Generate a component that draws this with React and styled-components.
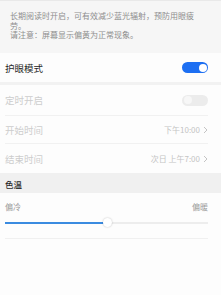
import React from "react";
import styled, { createGlobalStyle } from "styled-components";

const Global = createGlobalStyle`
  html, body { margin: 0; padding: 0; background: #fdfdfd; }
  body { font-family: "Noto Sans CJK SC", "Noto Sans", sans-serif; width: 221px; height: 295px; overflow: hidden; }
  * { box-sizing: border-box; }
`;

const Page = styled.div`
  width: 221px;
  height: 295px;
  display: flex;
  flex-direction: column;
  background: #fdfdfd;
`;

const Intro = styled.div`
  height: 53px;
  background: #f6f6f6;
  border-top: 1px solid #e9e9e9;
  padding: 10px 14px 0 10px;
  font-size: 8px;
  line-height: 9.5px;
  color: #8e8e8e;
`;

const Row = styled.div`
  height: ${(p) => p.h || 29}px;
  display: flex;
  align-items: center;
  justify-content: space-between;
  margin: 0 13px 0 5px;
  border-bottom: ${(p) => (p.line ? "1px solid #f1f1f1" : "none")};
`;

const Label = styled.span`
  font-size: 9.5px;
  color: ${(p) => (p.disabled ? "#cdcdcd" : "#262626")};
`;

const Value = styled.span`
  display: flex;
  align-items: center;
  gap: 3px;
  font-size: 8px;
  color: #c4c4c4;
`;

const Gap = styled.div`
  height: 3px;
  background: #f2f2f2;
`;

const Toggle = styled.div`
  width: 26px;
  height: 11px;
  border-radius: 6px;
  background: ${(p) => (p.on ? "#1d6ff2" : "#ececec")};
  display: flex;
  align-items: center;
  justify-content: ${(p) => (p.on ? "flex-end" : "flex-start")};
  padding: 0 1.5px;
`;

const Knob = styled.div`
  width: 8px;
  height: 8px;
  border-radius: 50%;
  background: ${(p) => (p.on ? "#ffffff" : "#f7f7f7")};
`;

const Header = styled.div`
  height: 20px;
  background: #f0f0f0;
  padding: 6px 5px 0;
  font-size: 8.5px;
  line-height: 10px;
  font-weight: 500;
  color: #2a2a2a;
`;

const Scale = styled.div`
  display: flex;
  justify-content: space-between;
  margin: 9px 13px 0 5px;
  font-size: 8px;
  color: #9a9a9a;
  line-height: 10px;
`;

const Slider = styled.div`
  position: relative;
  margin: 10px 13px 0 5px;
  height: 2px;
  background: #ededed;
`;

const Fill = styled.div`
  height: 2px;
  background: #3b8be0;
`;

const Thumb = styled.div`
  position: absolute;
  top: -4px;
  width: 9px;
  height: 9px;
  margin-left: -4.5px;
  border-radius: 50%;
  background: #fff;
  box-shadow: 0 0 2px rgba(0, 0, 0, 0.25);
`;

const Rule = styled.div`
  margin: 14px 13px 0 5px;
  height: 1px;
  background: #f0f0f0;
`;

const Chevron = () => (
  <svg width="5" height="8" viewBox="0 0 5 8">
    <path d="M1 1l3 3-3 3" fill="none" stroke="#c4c4c4" strokeWidth="1" />
  </svg>
);

export default function App() {
  const pct = 50.5;
  return (
    <Page>
      <Global />
      <Intro>
        长期阅读时开启，可有效减少蓝光辐射，预防用眼疲劳。
        <br />
        请注意：屏幕显示偏黄为正常现象。
      </Intro>
      <Row h={29}>
        <Label>护眼模式</Label>
        <Toggle on>
          <Knob on />
        </Toggle>
      </Row>
      <Gap />
      <Row h={31} line>
        <Label disabled>定时开启</Label>
        <Toggle>
          <Knob />
        </Toggle>
      </Row>
      <Row h={28} line>
        <Label disabled>开始时间</Label>
        <Value>
          下午10:00 <Chevron />
        </Value>
      </Row>
      <Row h={29}>
        <Label disabled>结束时间</Label>
        <Value>
          次日 上午7:00 <Chevron />
        </Value>
      </Row>
      <Header>色温</Header>
      <Scale>
        <span>偏冷</span>
        <span>偏暖</span>
      </Scale>
      <Slider>
        <Fill style={{ width: `${pct}%` }} />
        <Thumb style={{ left: `${pct}%` }} />
      </Slider>
      <Rule />
    </Page>
  );
}
